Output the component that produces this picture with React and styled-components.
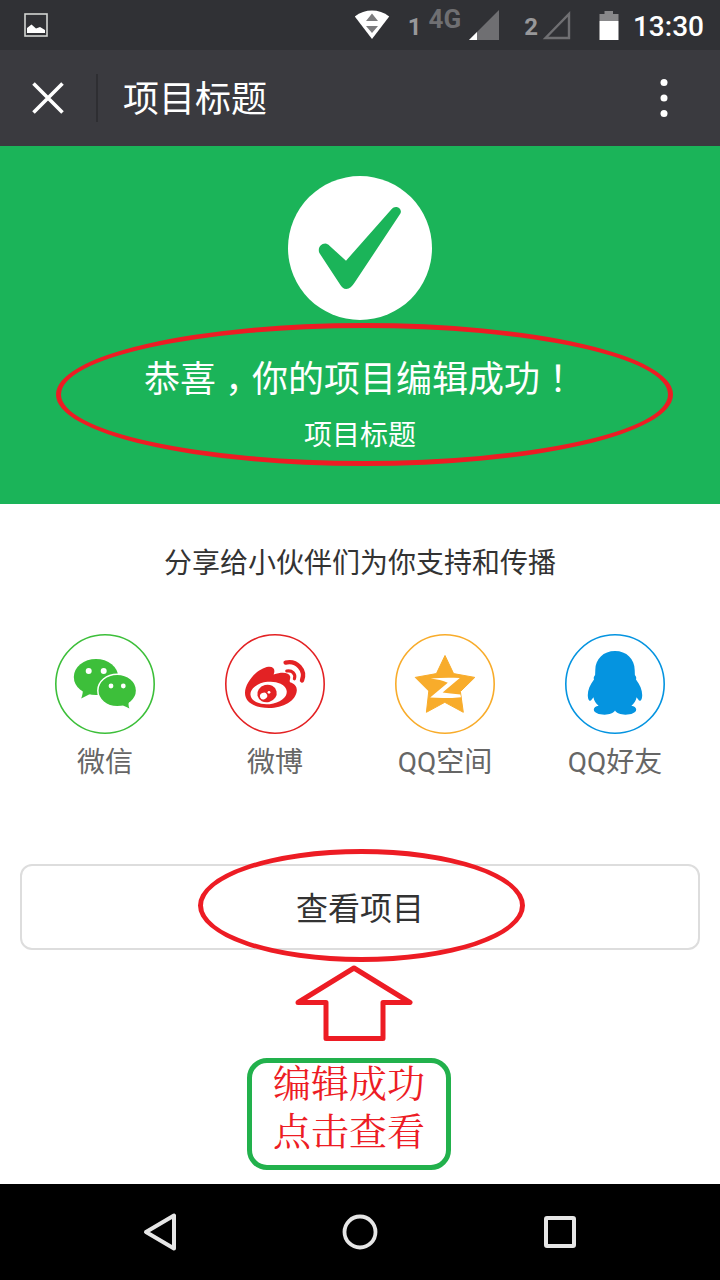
import React from 'react'
import styled, {createGlobalStyle} from 'styled-components';

const GlobalStyle = createGlobalStyle`
  * {
    box-sizing : border-box;
  }
  body {
    margin : 0;
    background : #fff;
    font-family : Roboto, "Noto Sans CJK SC", sans-serif;
  }
  button {
    padding : 0;
    border : 0;
    background : none;
    color : inherit;
    font-family : inherit;
    cursor : pointer;
  }
  svg {
    display : block;
  }
`;

const Page = styled.div`
  display : flex;
  flex-direction : column;
  min-height : 100vh;
`;

const StatusBar = styled.div`
  display : flex;
  align-items : center;
  justify-content : space-between;
  height : 50px;
  padding : 0 16px 0 24px;
  background : #303135;
`;

const StatusGroup = styled.div`
  display : flex;
  align-items : center;
  gap : ${props => props.$gap || 0}px;
`;

const SimNumber = styled.span`
  padding-top : 4px;
  font-size : 24px;
  line-height : 28px;
  font-weight : 700;
  color : #98989a;
`;

const Network = styled.span`
  padding-bottom : 12px;
  font-size : 26px;
  line-height : 28px;
  font-weight : 700;
  color : #6f6f72;
`;

const Clock = styled.span`
  padding-top : 3px;
  font-size : 28px;
  line-height : 32px;
  font-weight : 500;
  color : #fff;
`;

const Header = styled.header`
  display : flex;
  align-items : center;
  height : 96px;
  background : #3a3a3f;
  color : #fff;
`;

const CloseButton = styled.button`
  display : flex;
  align-items : center;
  justify-content : center;
  width : 96px;
  height : 96px;
`;

const Divider = styled.div`
  width : 2px;
  height : 48px;
  background : #2e2e32;
`;

const HeaderTitle = styled.h1`
  flex : 1;
  margin : 0;
  padding : 4px 0 0 25px;
  font-size : 36px;
  line-height : 48px;
  font-weight : 400;
`;

const MoreButton = styled.button`
  display : flex;
  align-items : center;
  justify-content : center;
  width : 112px;
  height : 96px;
`;

const Hero = styled.section`
  display : flex;
  flex-direction : column;
  align-items : center;
  padding : 30px 0 0;
  background : #1bb459;
  color : #fff;
`;

const Congrats = styled.div`
  position : relative;
  align-self : stretch;
  padding : 36px 0 48px;
  text-align : center;
`;

const CongratsTitle = styled.h2`
  margin : 0 0 12px;
  font-size : 36px;
  line-height : 48px;
  font-weight : 400;
`;

const CongratsSub = styled.p`
  margin : 0;
  font-size : 28px;
  line-height : 40px;
`;

// 居中的全角标点
const Mark = styled.span`
  display : inline-block;
  width : 36px;
  line-height : 36px;
  font-family : "Noto Sans CJK SC", sans-serif;
  font-feature-settings : "halt";
`;

const Ring = styled.div`
  position : absolute;
  top : ${props => props.$top}px;
  left : ${props => props.$left}px;
  right : ${props => props.$right}px;
  height : ${props => props.$height}px;
  border : 5px solid #ed1c24;
  border-radius : 50%;
  pointer-events : none;
`;

const Main = styled.main`
  flex : 1;
  padding : 40px 20px 14px;
`;

const ShareText = styled.p`
  margin : 0 0 50px;
  font-size : 28px;
  line-height : 40px;
  text-align : center;
  color : #333;
`;

const ShareList = styled.div`
  display : grid;
  grid-template-columns : repeat(4, 1fr);
`;

const ShareButton = styled.button`
  display : flex;
  flex-direction : column;
  align-items : center;
  gap : 9px;
  font-size : 28px;
  line-height : 40px;
  color : #666;
`;

const Action = styled.div`
  position : relative;
  margin-top : 81px;
`;

const ViewButton = styled.button`
  width : 100%;
  height : 86px;
  padding-bottom : 2px;
  border : 2px solid #ddd;
  border-radius : 12px;
  background : #fff;
  font-size : 32px;
  color : #333;
`;

const Guide = styled.div`
  display : flex;
  flex-direction : column;
  align-items : center;
  gap : 15px;
  padding : 14px 22px 0 0;
`;

const GuideBox = styled.div`
  display : flex;
  flex-direction : column;
  gap : 12px;
  width : 204px;
  height : 112px;
  border : 5px solid #22b14c;
  border-radius : 20px;
  font-family : "Noto Serif CJK SC", "Noto Sans CJK SC", serif;
  font-size : 38px;
  line-height : 36px;
  font-weight : 400;
  text-align : center;
  color : #ed1c24;
`;

const NavBar = styled.nav`
  display : grid;
  grid-template-columns : repeat(3, 1fr);
  height : 96px;
  padding : 0 60px;
  background : #000;
`;

const NavButton = styled.button`
  display : flex;
  align-items : center;
  justify-content : center;
`;

function WechatIcon(){
  return (
    <svg width="100" height="100" viewBox="0 0 100 100">
      <circle cx="50" cy="50" r="49.2" fill="none" stroke="#3dbf3a" strokeWidth="1.6" />
      <g fill="#3dbf3a">
        <ellipse cx="41" cy="43" rx="22.2" ry="18" />
        <path d="M28 54 C28 58 27.5 61 26.2 64.4 L36 59.5 Z" />
        <ellipse cx="62.2" cy="56.5" rx="19.4" ry="16.2" stroke="#fff" strokeWidth="1.5" />
        <path d="M65 71 C68.5 71 71 73 74.4 74.4 C73.4 72 73.2 69 74.2 66 Z" />
      </g>
      <g fill="#fff">
        <circle cx="33.7" cy="37" r="3" />
        <circle cx="48.7" cy="37" r="3" />
        <circle cx="56" cy="52" r="2.4" />
        <circle cx="68.3" cy="52" r="2.4" />
      </g>
    </svg>
  )
}

function WeiboIcon(){
  return (
    <svg width="100" height="100" viewBox="0 0 100 100">
      <circle cx="50" cy="50" r="49.2" fill="none" stroke="#e32224" strokeWidth="1.6" />
      <path fill="#e32224" d="M20 59 C20 48 33 34 43.5 32.8 C49 32.4 50.5 36 48.6 40.6 C57 37.6 64 38.4 65.2 42.5 C65.7 44.6 64 46.8 65 48.2 C69.5 49.6 72 52.2 71.8 56.5 C71 67 58 74 44 74 C30 74 20 68.5 20 59 Z" />
      <ellipse cx="43.6" cy="59" rx="18.2" ry="11.2" fill="#fff" transform="rotate(-6 43.6 59)" />
      <ellipse cx="42" cy="59.5" rx="9.8" ry="8.7" fill="#e32224" transform="rotate(-14 42 59.5)" />
      <ellipse cx="38.6" cy="62" rx="3.7" ry="3.2" fill="#fff" transform="rotate(-25 38.6 62)" />
      <circle cx="44" cy="58.3" r="1.4" fill="#fff" />
      <g fill="none" stroke="#e32224" strokeLinecap="round">
        <path strokeWidth="4.4" d="M60.6 28.6 C72 26 81 36.5 77 46.4" />
        <path strokeWidth="3.2" d="M61.8 37 C67 36 71 40 69.4 44.8" />
      </g>
    </svg>
  )
}

function QzoneIcon(){
  return (
    <svg width="100" height="100" viewBox="0 0 100 100">
      <circle cx="50" cy="50" r="49.2" fill="none" stroke="#f8ac2b" strokeWidth="1.6" />
      <path fill="#f8ac2b" stroke="#f8ac2b" strokeLinejoin="round" d="M50 21.5 L58.6 39.6 L79.8 43.4 L65.4 57.6 L68.3 78.3 L49.8 68.3 L31.4 78.3 L33.8 57 L20.2 43.4 L41.4 39.6 Z" />
      <path fill="#fff" d="M35.7 44.6 C45 43.6 55 43.6 64.8 44 L47.6 58.6 C52 59.6 59 59.6 65.4 60.6 L66 63.2 C56 64.2 45 64.4 35.2 63.6 L52.8 48.8 C48 46.6 42 45.4 35.7 44.6 Z" />
    </svg>
  )
}

function QQIcon(){
  return (
    <svg width="100" height="100" viewBox="0 0 100 100">
      <circle cx="50" cy="50" r="49.2" fill="none" stroke="#0594e0" strokeWidth="1.6" />
      <path fill="#0594e0" d="M50 17 C61.5 17 69.7 25 69.7 36 L69.9 41 C71.3 42.6 71.5 44 71 45.4 C75 50.5 77.2 56 77.2 61 C77.2 64 76.4 66.8 75 66.8 C73.6 66.8 72.4 64 71.6 63.2 C71 66.5 69 69.5 66.4 71.8 C69.2 72.2 71.2 73.6 71.2 75.6 C71.2 79 66 80.7 60.4 80.7 C55.5 80.7 51.6 79.2 50 76.6 C48.4 79.2 44.5 80.7 39.6 80.7 C34 80.7 28.8 79 28.8 75.6 C28.8 73.6 30.8 72.2 33.6 71.8 C31 69.5 29 66.5 28.4 63.2 C27.6 64 26.4 66.8 25 66.8 C23.6 66.8 22.8 64 22.8 61 C22.8 56 25 50.5 29 45.4 C28.5 44 28.7 42.6 30.1 41 L30.3 36 C30.3 25 38.5 17 50 17 Z" />
    </svg>
  )
}

const shares = [
  {name : '微信', icon : <WechatIcon />},
  {name : '微博', icon : <WeiboIcon />},
  {name : 'QQ空间', icon : <QzoneIcon />},
  {name : 'QQ好友', icon : <QQIcon />},
];

function Status(){
  return (
    <StatusBar>
      <svg width="24" height="24" viewBox="0 0 24 24">
        <rect x="1" y="1" width="22" height="22" fill="none" stroke="#d3d5d2" strokeWidth="1.6" />
        <path fill="#fff" d="M3 20 V15 L7.5 11.5 L12 15.5 L16 14 L21 17 V20 Z" />
      </svg>
      <StatusGroup $gap={25}>
        <StatusGroup $gap={18}>
          <svg width="36" height="30" viewBox="0 0 36 30">
            <path fill="#fff" d="M0.8 6.5 C11 -1.4 25 -1.4 35.2 6.5 L18 29 Z" />
            <path fill="#7b7b7d" d="M18 3.5 L24 11 H12 Z M12 16 H24 L18 23 Z" />
          </svg>
          <StatusGroup $gap={7}>
            <SimNumber>1</SimNumber>
            <Network>4G</Network>
            <svg width="31" height="30" viewBox="0 0 31 30">
              <path fill="#6f6f72" d="M31 0 V30 H1 Z" />
              <path fill="#fff" d="M9 22 V30 H1 Z" />
            </svg>
          </StatusGroup>
        </StatusGroup>
        <StatusGroup $gap={28}>
          <StatusGroup $gap={4}>
            <SimNumber>2</SimNumber>
            <svg width="29" height="30" viewBox="0 0 29 30">
              <path fill="none" stroke="#6f6f72" strokeWidth="2.4" d="M27 4 V28 H3.5 Z" />
            </svg>
          </StatusGroup>
          <StatusGroup $gap={14}>
            <svg width="20" height="29" viewBox="0 0 20 29">
              <path fill="#88888a" d="M5.5 0 H14 V3 H19.5 V10 H0.5 V3 H5.5 Z" />
              <path fill="#fff" d="M0.5 10 H19.5 V29 H0.5 Z" />
            </svg>
            <Clock>13:30</Clock>
          </StatusGroup>
        </StatusGroup>
      </StatusGroup>
    </StatusBar>
  )
}

export default function App() {
  return (
    <Page>
      <GlobalStyle />
      <Status />

      <Header>
        <CloseButton aria-label="关闭">
          <svg width="32" height="32" viewBox="0 0 32 32">
            <path stroke="#fff" strokeWidth="3.6" d="M1.5 1.5 L30.5 30.5 M30.5 1.5 L1.5 30.5" />
          </svg>
        </CloseButton>
        <Divider />
        <HeaderTitle>项目标题</HeaderTitle>
        <MoreButton aria-label="更多">
          <svg width="8" height="40" viewBox="0 0 8 40" fill="#fff">
            <circle cx="4" cy="4.5" r="3.5" />
            <circle cx="4" cy="20" r="3.5" />
            <circle cx="4" cy="35.5" r="3.5" />
          </svg>
        </MoreButton>
      </Header>

      <Hero>
        <svg width="144" height="144" viewBox="0 0 144 144">
          <circle cx="72" cy="72" r="72" fill="#fff" />
          <path fill="#1bb459" d="M31.4 77 C29.4 72.5 32.5 67.6 37.3 67.6 C39 67.6 40.2 68.6 41.5 69.8 L58 84.7 L102.4 34.4 C104.2 32.2 106 31 108 31 C111.6 31 114 34.6 112.4 37.6 L67 106 C64 110.5 61.5 113 58.3 113 C55.5 113 53.8 111 52.4 109 Z" />
        </svg>
        <Congrats>
          <CongratsTitle>恭喜<Mark>，</Mark>你的项目编辑成功<Mark>！</Mark></CongratsTitle>
          <CongratsSub>项目标题</CongratsSub>
          <Ring $top={3} $left={56} $right={47} $height={143} />
        </Congrats>
      </Hero>

      <Main>
        <ShareText>分享给小伙伴们为你支持和传播</ShareText>
        <ShareList>
          {
            shares.map(share => (
              <ShareButton key={share.name}>
                {share.icon}
                <span>{share.name}</span>
              </ShareButton>
            ))
          }
        </ShareList>

        <Action>
          <ViewButton>查看项目</ViewButton>
          <Ring $top={-15} $left={178} $right={175} $height={113} />
        </Action>

        <Guide>
          <svg width="128" height="79" viewBox="0 0 128 79">
            <path fill="none" stroke="#ed1c24" strokeWidth="5" strokeLinejoin="round" d="M69 4 L125 38.5 H98 V74.5 H41 V38.5 H13 Z" />
          </svg>
          <GuideBox>
            <span>编辑成功</span>
            <span>点击查看</span>
          </GuideBox>
        </Guide>
      </Main>

      <NavBar>
        <NavButton aria-label="返回">
          <svg width="36" height="40" viewBox="0 0 36 40">
            <path fill="none" stroke="#e6e6e6" strokeWidth="4" strokeLinejoin="round" d="M32 3.5 V36.5 L4 20 Z" />
          </svg>
        </NavButton>
        <NavButton aria-label="主页">
          <svg width="36" height="36" viewBox="0 0 36 36">
            <circle cx="18" cy="18" r="15.5" fill="none" stroke="#e6e6e6" strokeWidth="3.8" />
          </svg>
        </NavButton>
        <NavButton aria-label="最近任务">
          <svg width="32" height="32" viewBox="0 0 32 32">
            <rect x="2" y="2" width="28" height="28" rx="1" fill="none" stroke="#e6e6e6" strokeWidth="4" />
          </svg>
        </NavButton>
      </NavBar>
    </Page>
  )
}
